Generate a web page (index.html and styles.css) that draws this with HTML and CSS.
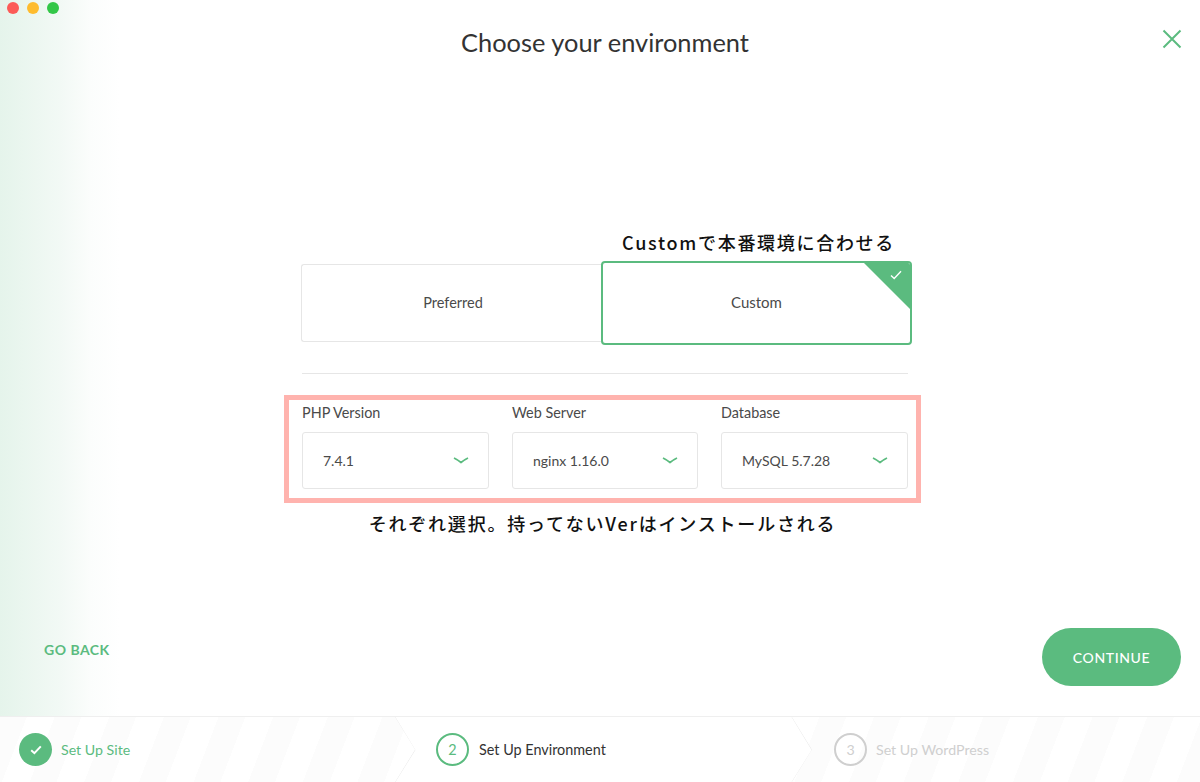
FILE: index.html
```html
<!DOCTYPE html>
<html lang="en">
<head>
  <meta charset="UTF-8">
  <meta name="viewport" content="width=device-width, initial-scale=1.0">
  <title>Choose your environment</title>
  <link rel="stylesheet" href="styles.css">
</head>
<body>
  <div class="main">
    <!-- Window controls -->
    <div class="traffic">
      <span class="dot red"></span>
      <span class="dot yellow"></span>
      <span class="dot green"></span>
    </div>

    <svg class="close" width="20" height="20" viewBox="0 0 20 20">
      <path d="M1.5 1.5 L18.5 18.5 M18.5 1.5 L1.5 18.5" fill="none" stroke="#5bbb7f" stroke-width="2"/>
    </svg>

    <h1>Choose your environment</h1>

    <div class="content">
      <p class="note note-top">Customで本番環境に合わせる</p>

      <!-- Environment type -->
      <div class="cards">
        <div class="card">Preferred</div>
        <div class="card selected">
          Custom
          <span class="corner"></span>
          <svg class="corner-check" width="12" height="10" viewBox="0 0 12 10">
            <path d="M1 5.5 L4.2 8.5 L11 1.2" fill="none" stroke="#ffffff" stroke-width="1.4"/>
          </svg>
        </div>
      </div>

      <div class="divider"></div>

      <!-- Version selects -->
      <div class="options">
        <div class="field">
          <label>PHP Version</label>
          <div class="select">
            <span>7.4.1</span>
            <svg width="16" height="7" viewBox="0 0 16 7"><path d="M1 1 Q5 3 8 5.5 Q11 3 15 1" fill="none" stroke="#5bbb7f" stroke-width="1.7"/></svg>
          </div>
        </div>
        <div class="field">
          <label>Web Server</label>
          <div class="select">
            <span>nginx 1.16.0</span>
            <svg width="16" height="7" viewBox="0 0 16 7"><path d="M1 1 Q5 3 8 5.5 Q11 3 15 1" fill="none" stroke="#5bbb7f" stroke-width="1.7"/></svg>
          </div>
        </div>
        <div class="field">
          <label>Database</label>
          <div class="select">
            <span>MySQL 5.7.28</span>
            <svg width="16" height="7" viewBox="0 0 16 7"><path d="M1 1 Q5 3 8 5.5 Q11 3 15 1" fill="none" stroke="#5bbb7f" stroke-width="1.7"/></svg>
          </div>
        </div>
      </div>

      <p class="note note-bottom">それぞれ選択。持ってないVerはインストールされる</p>
    </div>

    <div class="actions">
      <a class="back">GO BACK</a>
      <button class="continue">CONTINUE</button>
    </div>
  </div>

  <!-- Steps -->
  <div class="steps">
    <div class="step step-first">
      <span class="circle done">
        <svg width="12" height="10" viewBox="0 0 12 10"><path d="M1.2 5.2 L4.4 8.2 L10.8 1.4" fill="none" stroke="#ffffff" stroke-width="2"/></svg>
      </span>
      <span class="step-name green-text">Set Up Site</span>
    </div>
    <div class="step step-current">
      <svg class="chevrons" width="417" height="65" viewBox="0 0 417 65">
        <path d="M0 0 L20 33 L0 65 M397 0 L417 33 L397 65" fill="none" stroke="#ececec" stroke-width="1"/>
      </svg>
      <span class="circle current">2</span>
      <span class="step-name">Set Up Environment</span>
    </div>
    <div class="step step-last">
      <span class="circle todo">3</span>
      <span class="step-name muted">Set Up WordPress</span>
    </div>
  </div>
</body>
</html>
```

FILE: styles.css
```css
html, body {
  margin: 0;
  padding: 0;
  height: 782px;
  overflow: hidden;
}

body {
  display: flex;
  flex-direction: column;
  background-color: #ffffff;
  color: #4a4a4a;
  font-family: 'Lato', sans-serif;
  font-size: 14px;
}

.main {
  position: relative;
  flex: 1;
  display: flex;
  flex-direction: column;
  background: linear-gradient(90deg, #e5f4eb 0, #f2f9f5 60px, #fbfdfc 90px, #ffffff 120px);
}

.traffic {
  position: absolute;
  top: 2px;
  left: 7px;
  display: flex;
  gap: 8px;
}

.dot {
  width: 12px;
  height: 12px;
  border-radius: 50%;
}

.red { background-color: #fc5b57; }
.yellow { background-color: #febc2e; }
.green { background-color: #33c748; }

.close {
  position: absolute;
  top: 29px;
  left: 1162px;
}

h1 {
  margin: 26px 0 0 10px;
  font-size: 25.4px;
  font-weight: 400;
  line-height: 32px;
  text-align: center;
  color: #333333;
}

.content {
  width: 611px;
  margin: 171px 0 0 301px;
}

.note {
  margin: 0;
  font-family: 'Noto Sans CJK JP', sans-serif;
  font-size: 18px;
  font-weight: 500;
  line-height: 26px;
  color: #111111;
  text-align: center;
  letter-spacing: 1.7px;
}

.note-top {
  height: 26px;
  padding-right: 17px;
  text-align: right;
}

.note-bottom {
  margin-top: 7px;
  margin-left: -8px;
  letter-spacing: 1.8px;
}

.cards {
  display: flex;
  align-items: center;
  margin-top: 6px;
}

.card {
  display: flex;
  align-items: center;
  justify-content: center;
  box-sizing: border-box;
  width: 300px;
  height: 78px;
  padding: 0 0 2px 3px;
  border: 1px solid #e6e6e6;
  border-right: none;
  border-radius: 3px 0 0 3px;
  color: #4a4a4a;
  font-size: 14.5px;
}

.card.selected {
  position: relative;
  width: 311px;
  height: 84px;
  padding-left: 0;
  border: 2px solid #5bbb7f;
  border-radius: 4px;
  overflow: hidden;
  font-size: 15px;
}

.corner {
  position: absolute;
  top: -2px;
  right: -2px;
  width: 50px;
  height: 50px;
  background-color: #5bbb7f;
  clip-path: polygon(0 0, 100% 0, 100% 100%);
}

.corner-check {
  position: absolute;
  top: 7px;
  right: 8px;
}

.divider {
  height: 1px;
  margin: 28px 4px 0 1px;
  background-color: #e6e6e6;
}

.options {
  display: grid;
  grid-template-columns: 187px 186px 187px;
  gap: 23px;
  margin: 21px -9px 0 -17px;
  padding: 4px 8px 9px 13px;
  border: 5px solid #ffb3ae;
}

.field label {
  display: block;
  font-size: 14.4px;
  line-height: 18px;
  margin-bottom: 10px;
}

.select {
  display: flex;
  align-items: center;
  justify-content: space-between;
  box-sizing: border-box;
  height: 57px;
  padding: 0 19px 0 20px;
  border: 1px solid #e6e6e6;
  border-radius: 3px;
}

.select svg {
  margin-top: -1px;
}

.actions {
  display: flex;
  align-items: center;
  justify-content: space-between;
  margin-top: auto;
  padding: 0 19px 30px 44px;
}

.back {
  margin-top: -15px;
  font-size: 14px;
  font-weight: 700;
  letter-spacing: 0.5px;
  color: #5bbb7f;
}

.continue {
  width: 139px;
  height: 58px;
  border: none;
  border-radius: 29px;
  background-color: #5bbb7f;
  color: #ffffff;
  font-family: 'Lato', sans-serif;
  font-size: 14px;
  font-weight: 500;
  letter-spacing: 0.6px;
}

.steps {
  display: flex;
  height: 65px;
  border-top: 1px solid #efefef;
  background: repeating-linear-gradient(111deg, #fcfcfc 0, #fcfcfc 25px, #ffffff 25px, #ffffff 51px);
}

.step {
  display: flex;
  align-items: center;
  gap: 9px;
  box-sizing: border-box;
  font-size: 14.2px;
}

.step-first {
  width: 395px;
  padding-left: 19px;
}

.step-current {
  position: relative;
  width: 417px;
  padding-left: 41px;
  gap: 10px;
  font-size: 14.4px;
  background-color: #ffffff;
  clip-path: polygon(0 0, 397px 0, 417px 50%, 397px 100%, 0 100%, 20px 50%);
}

.step-last {
  flex: 1;
  padding-left: 22px;
}

.chevrons {
  position: absolute;
  top: 0;
  left: 0;
}

.circle {
  display: flex;
  align-items: center;
  justify-content: center;
  box-sizing: border-box;
  width: 33px;
  height: 33px;
  border-radius: 50%;
}

.circle.done {
  background-color: #5bbb7f;
}

.circle.current {
  border: 2px solid #5bbb7f;
  color: #5bbb7f;
}

.circle.todo {
  border: 2px solid #cfcfcf;
  color: #cfcfcf;
}

.step-name {
  color: #333333;
}

.green-text {
  color: #5bbb7f;
}

.muted {
  color: #cfcfcf;
}
```
